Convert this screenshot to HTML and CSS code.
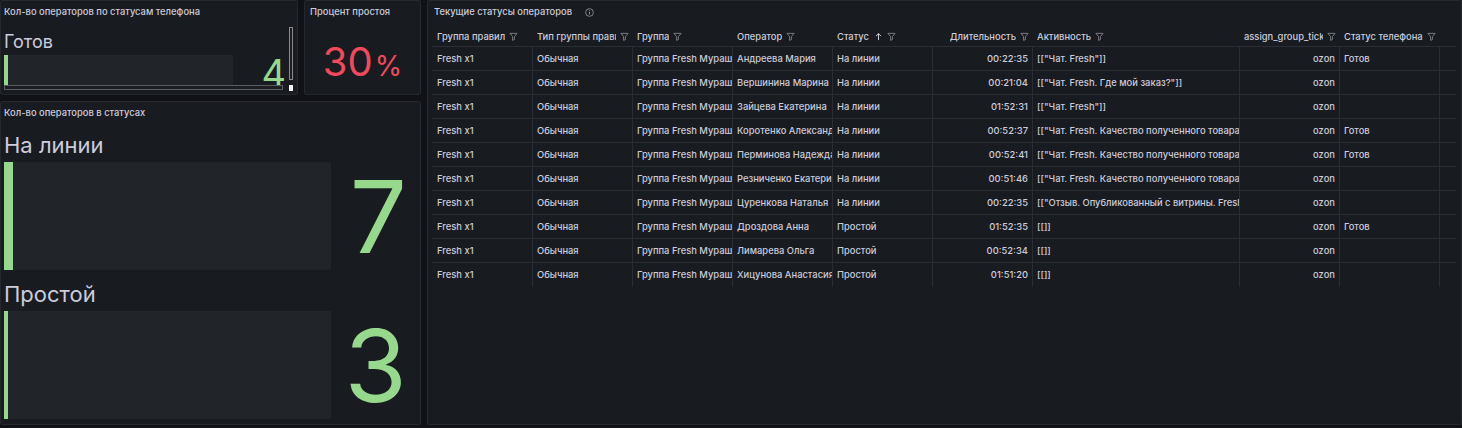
FILE: index.html
```html
<!DOCTYPE html>
<html lang="ru">
<head>
  <meta charset="UTF-8">
  <title>Статусы операторов</title>
  <link rel="stylesheet" href="styles.css">
</head>
<body>
  <div class="dashboard">

    <!-- Статусы телефона -->
    <section class="panel panel-phone">
      <div class="panel-title">Кол-во операторов по статусам телефона</div>
      <div class="phone-body">
        <div class="phone-content">
          <div class="gauge-label">Готов</div>
          <div class="gauge-row">
            <div class="gauge-bar"><div class="gauge-fill" style="width:4px"></div></div>
            <div class="gauge-value">4</div>
          </div>
        </div>
        <div class="vscroll"></div>
        <div class="hscroll"></div>
        <div class="scroll-corner"></div>
      </div>
    </section>

    <!-- Процент простоя -->
    <section class="panel panel-idle">
      <div class="panel-title">Процент простоя</div>
      <div class="stat-body">
        <span class="stat-value">30</span><span class="stat-unit">%</span>
      </div>
    </section>

    <!-- Текущие статусы -->
    <section class="panel panel-table">
      <div class="panel-title">
        Текущие статусы операторов
        <svg class="info-icon" viewBox="0 0 10 10" width="9" height="9">
          <circle cx="5" cy="5" r="4.3" fill="none" stroke="currentColor" stroke-width="0.9"/>
          <line x1="5" y1="4.4" x2="5" y2="7.2" stroke="currentColor" stroke-width="1"/>
          <circle cx="5" cy="2.9" r="0.6" fill="currentColor"/>
        </svg>
      </div>
      <div class="table-wrap">
        <div class="table">
          <div class="thead">
            <div class="th"><span class="th-text">Группа правил</span><svg class="filter" viewBox="0 0 10 10"><path d="M1 1.5h8L6 5.2v3.2L4 9.3V5.2z"/></svg></div>
            <div class="th"><span class="th-text">Тип группы правил</span><svg class="filter" viewBox="0 0 10 10"><path d="M1 1.5h8L6 5.2v3.2L4 9.3V5.2z"/></svg></div>
            <div class="th"><span class="th-text">Группа</span><svg class="filter" viewBox="0 0 10 10"><path d="M1 1.5h8L6 5.2v3.2L4 9.3V5.2z"/></svg></div>
            <div class="th"><span class="th-text">Оператор</span><svg class="filter" viewBox="0 0 10 10"><path d="M1 1.5h8L6 5.2v3.2L4 9.3V5.2z"/></svg></div>
            <div class="th"><span class="th-text">Статус</span><svg class="sort" viewBox="0 0 10 10"><path d="M5 9V1.8M2.2 4.6L5 1.8l2.8 2.8"/></svg><svg class="filter" viewBox="0 0 10 10"><path d="M1 1.5h8L6 5.2v3.2L4 9.3V5.2z"/></svg></div>
            <div class="th right"><span class="th-text">Длительность</span><svg class="filter" viewBox="0 0 10 10"><path d="M1 1.5h8L6 5.2v3.2L4 9.3V5.2z"/></svg></div>
            <div class="th"><span class="th-text">Активность</span><svg class="filter" viewBox="0 0 10 10"><path d="M1 1.5h8L6 5.2v3.2L4 9.3V5.2z"/></svg></div>
            <div class="th right"><span class="th-text">assign_group_ticket</span><svg class="filter" viewBox="0 0 10 10"><path d="M1 1.5h8L6 5.2v3.2L4 9.3V5.2z"/></svg></div>
            <div class="th"><span class="th-text">Статус телефона</span><svg class="filter" viewBox="0 0 10 10"><path d="M1 1.5h8L6 5.2v3.2L4 9.3V5.2z"/></svg></div>
            <div class="th"></div>
          </div>
          <div id="rows"></div>
        </div>
      </div>
    </section>

    <!-- Кол-во в статусах -->
    <section class="panel panel-status">
      <div class="panel-title">Кол-во операторов в статусах</div>
      <div class="status-body">
        <div class="status-item">
          <div class="status-label">На линии</div>
          <div class="status-row">
            <div class="gauge-bar"><div class="gauge-fill" style="width:9px"></div></div>
            <div class="status-value">7</div>
          </div>
        </div>
        <div class="status-item">
          <div class="status-label">Простой</div>
          <div class="status-row">
            <div class="gauge-bar"><div class="gauge-fill" style="width:4px"></div></div>
            <div class="status-value">3</div>
          </div>
        </div>
      </div>
    </section>

  </div>

  <script>
    // Данные таблицы
    const rows = [
      ['Андреева Мария', 'На линии', '00:22:35', '[["Чат. Fresh"]]', 'Готов'],
      ['Вершинина Марина', 'На линии', '00:21:04', '[["Чат. Fresh. Где мой заказ?"]]', ''],
      ['Зайцева Екатерина', 'На линии', '01:52:31', '[["Чат. Fresh"]]', ''],
      ['Коротенко Александра', 'На линии', '00:52:37', '[["Чат. Fresh. Качество полученного товара"]]', 'Готов'],
      ['Перминова Надежда', 'На линии', '00:52:41', '[["Чат. Fresh. Качество полученного товара"]]', 'Готов'],
      ['Резниченко Екатерина', 'На линии', '00:51:46', '[["Чат. Fresh. Качество полученного товара"]]', ''],
      ['Цуренкова Наталья', 'На линии', '00:22:35', '[["Отзыв. Опубликованный с витрины. Fresh"]]', ''],
      ['Дроздова Анна', 'Простой', '01:52:35', '[[]]', 'Готов'],
      ['Лимарева Ольга', 'Простой', '00:52:34', '[[]]', ''],
      ['Хицунова Анастасия', 'Простой', '01:51:20', '[[]]', ''],
    ];

    const list = document.getElementById('rows');
    rows.forEach((r) => {
      const tr = document.createElement('div');
      tr.className = 'tr';
      const cells = [
        ['Fresh x1', ''],
        ['Обычная', ''],
        ['Группа Fresh Мурашкина', ''],
        [r[0], ''],
        [r[1], ''],
        [r[2], 'right'],
        [r[3], ''],
        ['ozon', 'right'],
        [r[4], ''],
        ['', 'last'],
      ];
      cells.forEach(([text, cls]) => {
        const td = document.createElement('div');
        td.className = 'td ' + cls;
        td.textContent = text;
        tr.appendChild(td);
      });
      list.appendChild(tr);
    });
  </script>
</body>
</html>
```

FILE: styles.css
```css
body {
  margin: 0;
  background-color: #111217;
  font-family: Inter, "Noto Sans", sans-serif;
  color: #ccccdc;
  height: 428px;
  overflow: hidden;
}
.dashboard {
  display: grid;
  grid-template-columns: 298px 117px 1035px;
  grid-template-rows: 95px 324px;
  gap: 6px;
  width: 1462px;
}
.panel {
  background-color: #181b1f;
  border: 1px solid #25282d;
  border-radius: 2px;
  box-sizing: border-box;
  display: flex;
  flex-direction: column;
  overflow: hidden;
  min-width: 0;
}
.panel-title {
  height: 22px;
  line-height: 22px;
  font-size: 9.4px;
  font-weight: 500;
  padding-left: 3px;
  white-space: nowrap;
  flex-shrink: 0;
  display: flex;
  align-items: center;
}

/* Статусы телефона */
.phone-body {
  flex: 1;
  display: grid;
  grid-template-columns: 1fr 5px;
  grid-template-rows: 1fr 5px;
  padding: 0 4px 4px 3px;
  min-height: 0;
}
.phone-content {
  padding-top: 8px;
  min-width: 0;
}
.gauge-label {
  font-size: 18px;
  line-height: 22px;
  margin-bottom: 2px;
}
.gauge-row {
  display: grid;
  grid-template-columns: 229px 1fr;
  height: 30px;
}
.gauge-bar {
  background-color: #212429;
  border-radius: 1px;
  display: flex;
}
.gauge-fill {
  background-color: #96d98d;
  height: 100%;
}
.gauge-value {
  font-size: 38px;
  line-height: 30px;
  text-align: right;
  color: #96d98d;
  padding-right: 2px;
  padding-top: 3px;
}
.vscroll {
  margin: 4px 0 5px 1px;
  border: 1px solid #8a8b90;
  background-color: #1c1e22;
}
.hscroll {
  margin-right: 5px;
  border: 1px solid #5b5d63;
  background-color: #1c1e22;
}
.scroll-corner {
  margin: 0 0 -1px 1px;
  background-color: #f4f4f6;
}

/* Процент простоя */
.panel-idle .panel-title {
  padding-left: 5px;
}
.stat-body {
  flex: 1;
  display: flex;
  align-items: baseline;
  justify-content: center;
  padding-top: 19px;
  color: #f2495c;
}
.stat-value {
  font-size: 40px;
  line-height: 40px;
}
.stat-unit {
  font-size: 28px;
  margin-left: 2px;
}

/* Кол-во в статусах */
.panel-status {
  grid-column: 1 / span 2;
}
.status-body {
  padding: 9px 10px 0 3px;
  display: flex;
  flex-direction: column;
  gap: 12px;
}
.status-label {
  font-size: 22px;
  line-height: 25px;
  margin-bottom: 4px;
}
.status-row {
  display: grid;
  grid-template-columns: 327px 1fr;
  height: 108px;
}
.status-value {
  font-size: 101px;
  line-height: 108px;
  text-align: right;
  color: #96d98d;
  padding-right: 3px;
}

/* Таблица */
.panel-table {
  grid-column: 3;
  grid-row: 1 / span 2;
}
.panel-table .panel-title {
  padding-left: 6px;
}
.info-icon {
  color: #9a9ba2;
  margin-left: 13px;
  margin-top: 1px;
}
.table-wrap {
  padding: 3px 4px 0 4px;
}
.table {
  font-size: 9.4px;
  width: 1024px;
}
.thead, .tr {
  display: grid;
  grid-template-columns: 101px 100px 100px 100px 100px 100px 207px 100px 100px 1fr;
}
.thead {
  height: 21px;
  border-bottom: 1px solid #2a2d32;
  box-sizing: border-box;
}
.th {
  display: flex;
  align-items: center;
  font-weight: 500;
  padding: 0 4px;
  min-width: 0;
  white-space: nowrap;
}
.th:first-child, .td:first-child {
  padding-left: 5px;
}
.th.right {
  justify-content: flex-end;
}
.th-text {
  overflow: hidden;
  min-width: 0;
}
.filter {
  width: 9px;
  height: 9px;
  flex-shrink: 0;
  margin-left: 4px;
  fill: none;
  stroke: #8e8f96;
  stroke-width: 0.9;
}
.sort {
  width: 9px;
  height: 9px;
  flex-shrink: 0;
  margin-left: 5px;
  margin-right: 0;
  fill: none;
  stroke: #ccccdc;
  stroke-width: 1.1;
}
.tr {
  height: 24px;
  border-bottom: 1px solid #2a2d32;
  box-sizing: border-box;
}
.tr:last-child {
  border-bottom: none;
}
.td {
  padding: 0 4px;
  line-height: 23px;
  white-space: nowrap;
  overflow: hidden;
  border-right: 1px solid #2a2d32;
  font-weight: 500;
}
.td.right {
  text-align: right;
}
.td.last {
  border-right: none;
}
```
